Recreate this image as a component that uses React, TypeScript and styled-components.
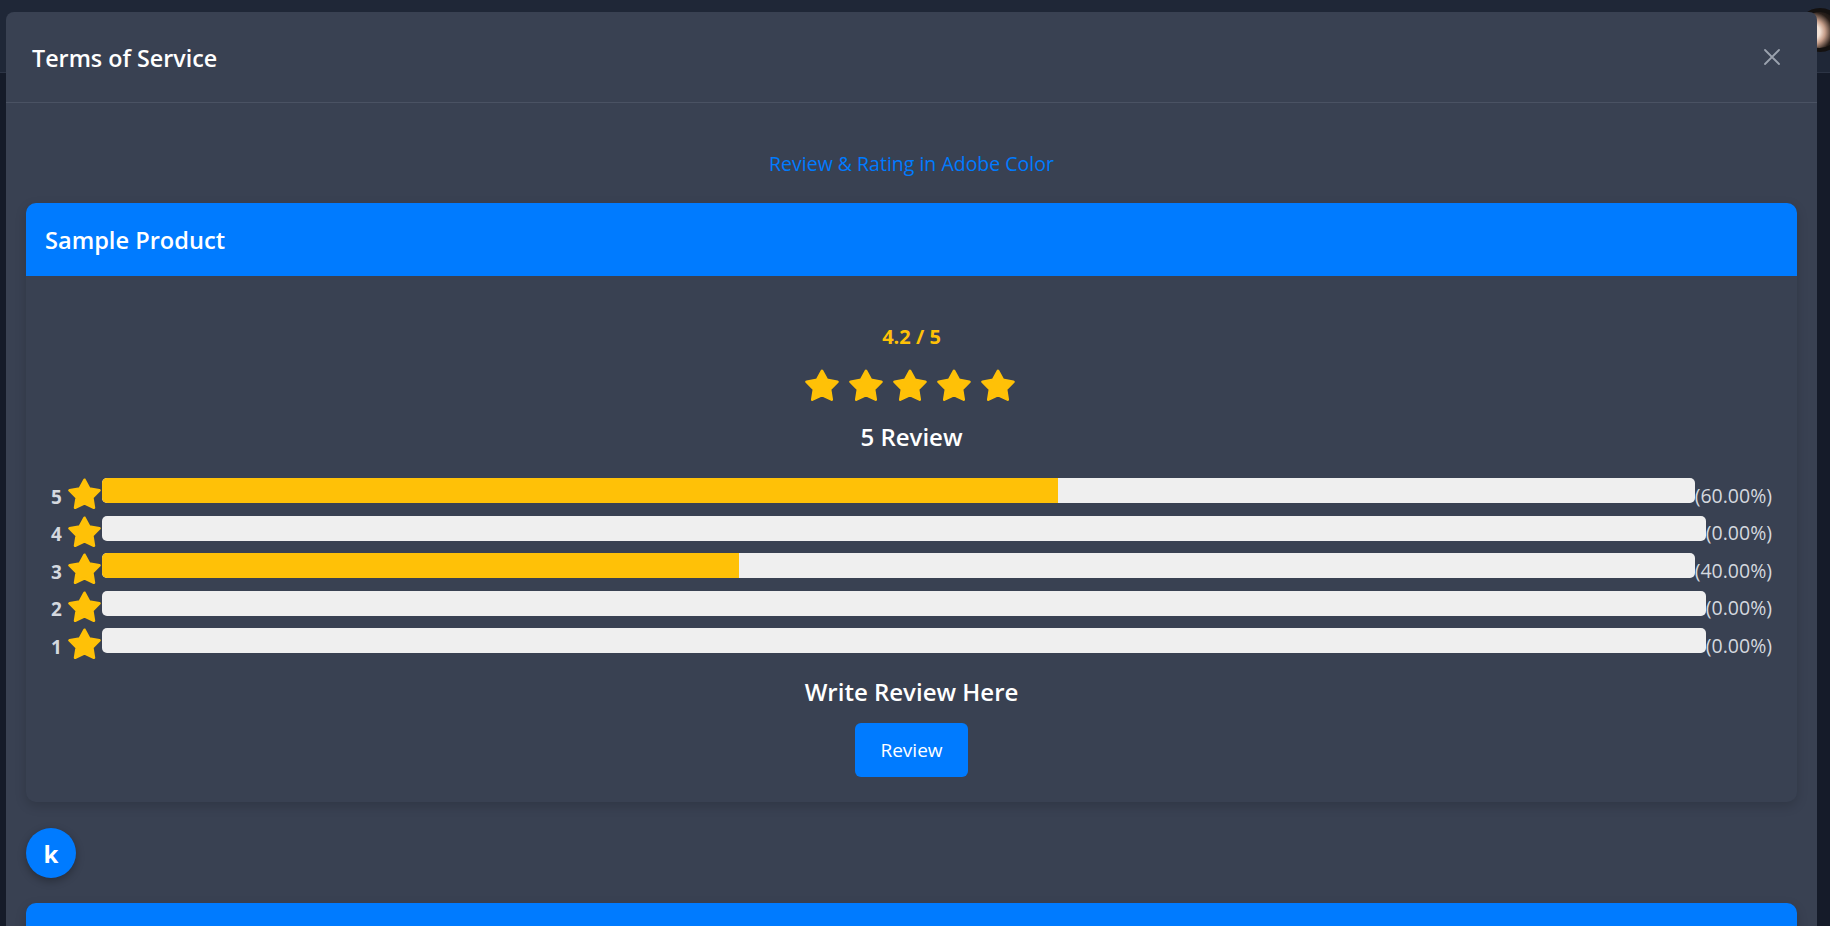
import React from "react";
import styled, { createGlobalStyle } from "styled-components";

const GlobalStyle = createGlobalStyle`
  html, body { margin: 0; padding: 0; }
  body {
    background: #151b29;
    font-family: "Open Sans", "Noto Sans", sans-serif;
    overflow: hidden;
  }
  * { box-sizing: border-box; }
`;

const Page = styled.div`
  position: relative;
  height: 926px;
  overflow: hidden;
`;

const Navbar = styled.header`
  position: relative;
  height: 73px;
  background: #1f2737;
  border-bottom: 1px solid #2c3445;
`;

const NavAvatar = styled.div`
  position: absolute;
  top: 8px;
  right: -12px;
  width: 44px;
  height: 44px;
  border-radius: 50%;
  border: 4px solid #141110;
  background: radial-gradient(circle at 30% 55%, #f3e2d6 0 22%, #c79f8b 38%, #2a201b 62%, #141110 80%);
`;

const Overlay = styled.div`
  position: absolute;
  inset: 0;
  overflow: hidden;
`;

const Modal = styled.div`
  margin: 12px 13px 0 6px;
  min-height: 1100px;
  background: #394152;
  border-radius: 8px 8px 0 0;
`;

const ModalHeader = styled.div`
  height: 91px;
  display: flex;
  align-items: center;
  justify-content: space-between;
  padding: 0 37px 0 26px;
  border-bottom: 1px solid #4a5263;
`;

const ModalTitle = styled.h5`
  margin: 0;
  padding-top: 3px;
  color: #ffffff;
  font-size: 23.3px;
  font-weight: 600;
  line-height: 1.2;
`;

const CloseButton = styled.button`
  width: 16px;
  height: 16px;
  padding: 0;
  border: none;
  background: transparent;
  display: flex;
  align-items: center;
  justify-content: center;
  cursor: pointer;
`;

const ModalBody = styled.div`
  padding: 20px;
`;

const LinkRow = styled.div`
  height: 80px;
  padding-top: 1px;
  display: flex;
  align-items: center;
  justify-content: center;
`;

const AdobeLink = styled.a`
  color: #007bff;
  font-size: 19.5px;
  text-decoration: none;
`;

const Card = styled.section`
  background: #394152;
  border-radius: 10px;
  overflow: hidden;
  box-shadow: 0 4px 12px rgba(0, 0, 0, 0.16);
`;

const CardHeader = styled.div`
  height: 73px;
  background: #007bff;
  padding: 0 19px;
  display: flex;
  align-items: center;
`;

const CardTitle = styled.h4`
  margin: 0;
  color: #ffffff;
  font-size: 23.6px;
  font-weight: 600;
  line-height: 1.2;
  padding-top: 2px;
`;

const CardBody = styled.div`
  padding: 47px 25px 25px;
  display: flex;
  flex-direction: column;
  align-items: center;
`;

const Score = styled.div`
  color: #ffc107;
  font-size: 20px;
  font-weight: 700;
  line-height: 28px;
`;

const StarRow = styled.div`
  margin-top: 18px;
  height: 32px;
  display: flex;
  gap: 10px;
  margin-right: 4px;
`;

const ReviewCount = styled.h4`
  margin: 20px 0 0;
  color: #ffffff;
  font-size: 24px;
  font-weight: 600;
  line-height: 32px;
`;

const Bars = styled.div`
  margin-top: 22px;
  width: 100%;
  display: flex;
  flex-direction: column;
`;

const BarRow = styled.div`
  height: 37.5px;
  display: flex;
  align-items: center;
`;

const RowLabel = styled.span`
  padding-top: 7px;
  margin-right: 6px;
  color: #d4d8df;
  font-size: 19px;
  font-weight: 700;
  line-height: 1;
`;

const Track = styled.div`
  flex: 1;
  height: 25px;
  margin: 0 0 6px 1px;
  background: #efefef;
  border-radius: 5px;
  overflow: hidden;
`;

const Fill = styled.div`
  height: 100%;
  background: #ffc107;
`;

const Percent = styled.span`
  margin-top: 3px;
  color: #d4d8df;
  font-size: 19.5px;
  line-height: 1;
`;

const WriteTitle = styled.h4`
  margin: 13.5px 0 0;
  color: #ffffff;
  font-size: 24px;
  font-weight: 600;
  line-height: 32px;
`;

const ReviewButton = styled.button`
  margin-top: 15px;
  height: 54px;
  padding: 0 25px;
  background: #007bff;
  color: #ffffff;
  border: none;
  border-radius: 6px;
  font-family: inherit;
  font-size: 19px;
  cursor: pointer;
`;

const UserBadge = styled.div`
  margin-top: 26px;
  width: 50px;
  height: 50px;
  border-radius: 50%;
  background: #007bff;
  color: #ffffff;
  font-size: 24px;
  font-weight: 700;
  display: flex;
  align-items: center;
  justify-content: center;
  box-shadow: 0 3px 8px rgba(0, 0, 0, 0.3);
`;

const NextCard = styled(Card)`
  margin-top: 25px;
`;

const StarIcon: React.FC<{ size: number }> = ({ size }) => (
  <svg width={size} height={size * 0.95} viewBox="1 1 22 21" aria-hidden="true">
    <polygon
      points="12,2.2 15.2,8.1 22,9.3 17.2,14.1 18.3,20.9 12,17.9 5.7,20.9 6.8,14.1 2,9.3 8.8,8.1"
      fill="#ffc107"
      stroke="#ffc107"
      strokeWidth={1.8}
      strokeLinejoin="round"
    />
  </svg>
);

const rows = [
  { stars: 5, pct: 60 },
  { stars: 4, pct: 0 },
  { stars: 3, pct: 40 },
  { stars: 2, pct: 0 },
  { stars: 1, pct: 0 },
];

export default function App() {
  return (
    <>
      <GlobalStyle />
      <Page>
        <Navbar>
          <NavAvatar />
        </Navbar>
        <Overlay>
          <Modal>
            <ModalHeader>
              <ModalTitle>Terms of Service</ModalTitle>
              <CloseButton aria-label="Close">
                <svg width="16" height="16" viewBox="0 0 16 16">
                  <path d="M1 1L15 15M15 1L1 15" stroke="#9ba2ae" strokeWidth="1.8" strokeLinecap="round" />
                </svg>
              </CloseButton>
            </ModalHeader>
            <ModalBody>
              <LinkRow>
                <AdobeLink href="#">Review &amp; Rating in Adobe Color</AdobeLink>
              </LinkRow>
              <Card>
                <CardHeader>
                  <CardTitle>Sample Product</CardTitle>
                </CardHeader>
                <CardBody>
                  <Score>4.2 / 5</Score>
                  <StarRow>
                    {[0, 1, 2, 3, 4].map((i) => (
                      <StarIcon key={i} size={34} />
                    ))}
                  </StarRow>
                  <ReviewCount>5 Review</ReviewCount>
                  <Bars>
                    {rows.map((r) => (
                      <BarRow key={r.stars}>
                        <RowLabel>{r.stars}</RowLabel>
                        <StarIcon size={33} />
                        <Track>
                          <Fill style={{ width: `${r.pct}%` }} />
                        </Track>
                        <Percent>({r.pct.toFixed(2)}%)</Percent>
                      </BarRow>
                    ))}
                  </Bars>
                  <WriteTitle>Write Review Here</WriteTitle>
                  <ReviewButton>Review</ReviewButton>
                </CardBody>
              </Card>
              <UserBadge>k</UserBadge>
              <NextCard>
                <CardHeader />
              </NextCard>
            </ModalBody>
          </Modal>
        </Overlay>
      </Page>
    </>
  );
}
